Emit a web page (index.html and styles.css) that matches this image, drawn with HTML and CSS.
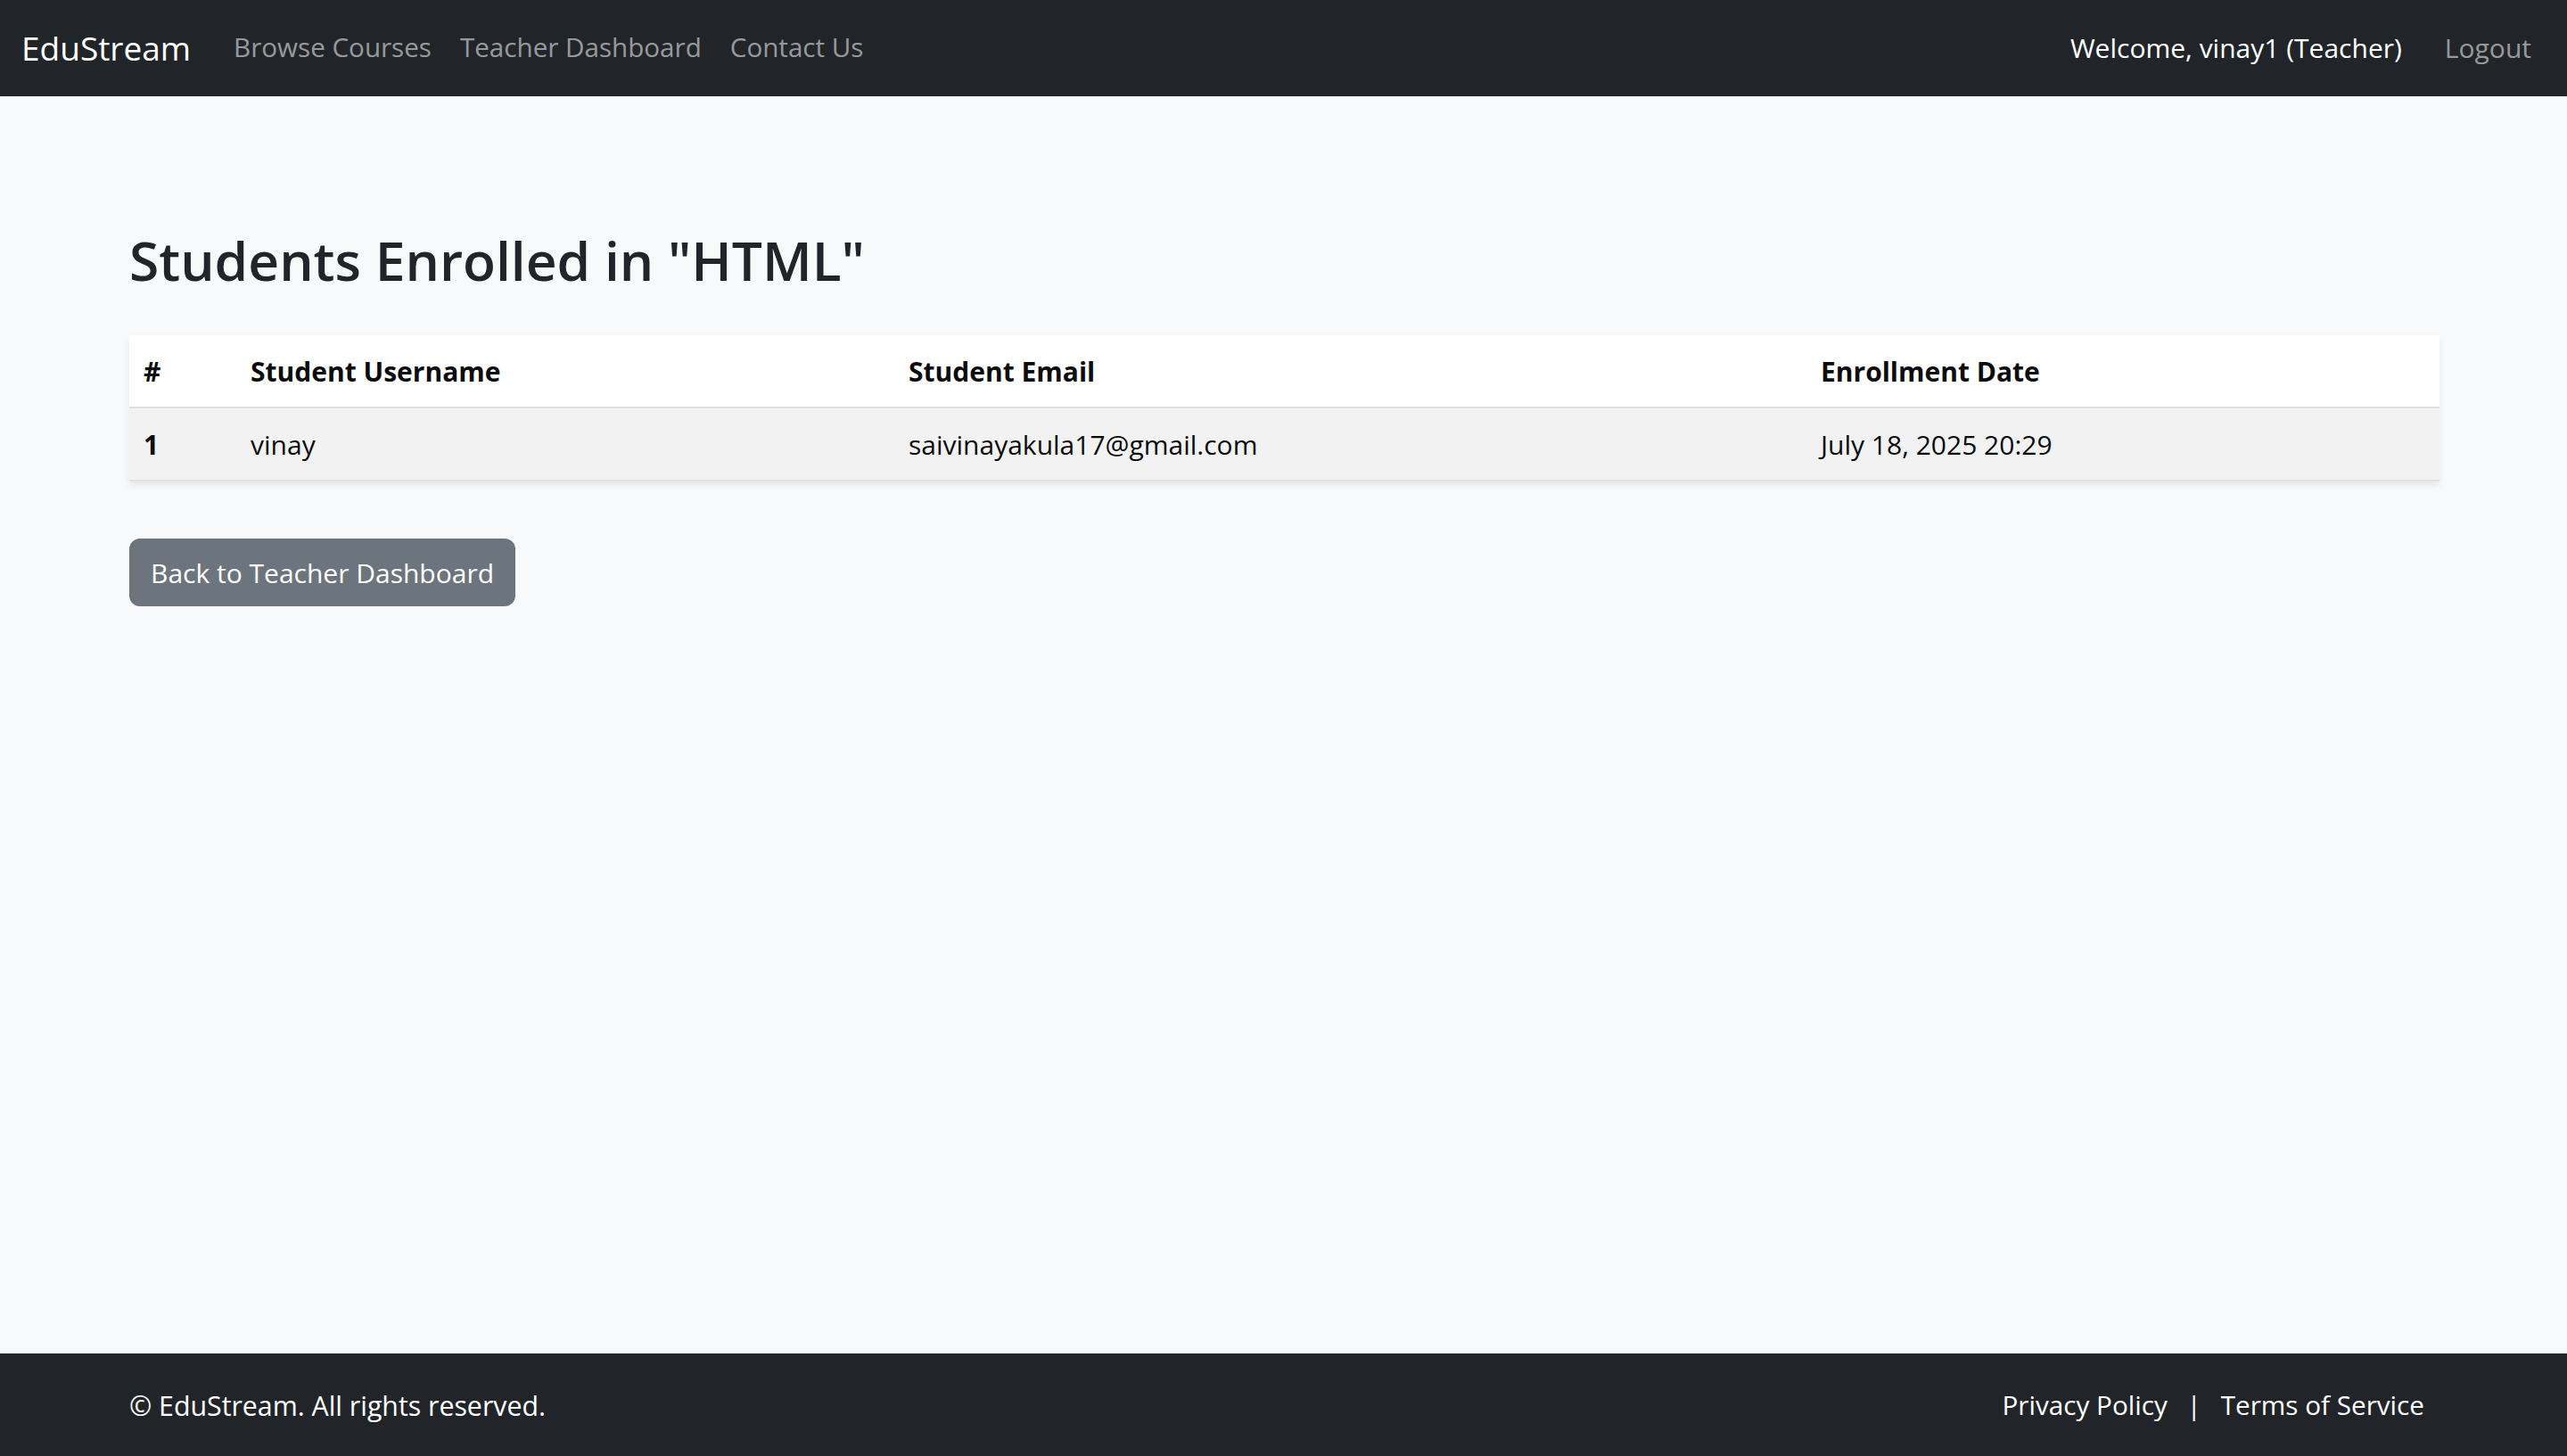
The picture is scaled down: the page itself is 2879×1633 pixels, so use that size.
FILE: index.html
```html
<!DOCTYPE html>
<html lang="en">
<head>
<meta charset="utf-8">
<title>Enrolled Students - EduStream</title>
<link rel="stylesheet" href="styles.css">
</head>
<body>
<nav class="navbar">
  <a class="brand" href="#">EduStream</a>
  <ul class="nav-links">
    <li><a class="nav-link" href="#">Browse Courses</a></li>
    <li><a class="nav-link" href="#">Teacher Dashboard</a></li>
    <li><a class="nav-link" href="#">Contact Us</a></li>
  </ul>
  <div class="nav-right">
    <span class="welcome">Welcome, vinay1 (Teacher)</span>
    <a class="nav-link" href="#">Logout</a>
  </div>
</nav>

<main class="main">
  <div class="container">
    <h1 class="title">Students Enrolled in "HTML"</h1>
    <table class="students">
      <colgroup>
        <col class="c-num">
        <col class="c-user">
        <col class="c-email">
        <col class="c-date">
      </colgroup>
      <thead>
        <tr>
          <th>#</th>
          <th>Student Username</th>
          <th>Student Email</th>
          <th>Enrollment Date</th>
        </tr>
      </thead>
      <tbody>
        <tr>
          <th>1</th>
          <td>vinay</td>
          <td>saivinayakula17@gmail.com</td>
          <td>July 18, 2025 20:29</td>
        </tr>
      </tbody>
    </table>
    <a class="btn" href="#">Back to Teacher Dashboard</a>
  </div>
</main>

<footer class="footer">
  <div class="footer-inner">
    <span class="copy">© EduStream. All rights reserved.</span>
    <div class="footer-links">
      <a href="#">Privacy Policy</a>
      <span class="sep">|</span>
      <a href="#">Terms of Service</a>
    </div>
  </div>
</footer>
</body>
</html>
```

FILE: styles.css
```css
* { box-sizing: border-box; }

html, body {
  margin: 0;
  padding: 0;
}

body {
  font-family: "Open Sans", "Noto Sans", "Liberation Sans", sans-serif;
  font-size: 30px;
  line-height: 1.5;
  color: #212529;
  background: #f8f9fa;
  min-height: 100vh;
  display: flex;
  flex-direction: column;
}

a { text-decoration: none; }

/* Navbar */
.navbar {
  height: 108px;
  background: #212529;
  display: flex;
  align-items: center;
  padding: 0 24px 1px;
}

.brand {
  color: #fff;
  font-size: 37px;
  margin-right: 32px;
  line-height: 1.5;
}

.nav-links {
  list-style: none;
  margin: 0;
  padding: 0;
  display: flex;
  font-size: 29.6px;
}

.nav-link {
  display: block;
  color: rgba(255, 255, 255, 0.55);
  padding: 0 16px;
}

.nav-right {
  margin-left: auto;
  display: flex;
  align-items: center;
}

.welcome {
  color: #fff;
  margin-right: 32px;
}

/* Main */
.main {
  flex: 1;
}

.container {
  margin-left: 145px;
  width: 2591px;
}

.title {
  font-size: 60.5px;
  font-weight: 600;
  line-height: 1.2;
  margin: 148px 0 47px;
}

.students {
  width: 100%;
  border-collapse: collapse;
  table-layout: fixed;
  background: #fff;
  box-shadow: 0 4px 8px rgba(0, 0, 0, 0.075);
  margin-bottom: 64px;
  color: #0b0c0d;
}

.c-num { width: 120px; }
.c-user { width: 738px; }
.c-email { width: 1023px; }
.c-date { width: 710px; }

.students th,
.students td {
  text-align: left;
  padding: 17px 16px 15px;
  line-height: 48px;
  border-bottom: 2px solid #dee2e6;
}

.students thead th {
  font-weight: 700;
  vertical-align: bottom;
}

.students tbody tr {
  background: #f2f2f2;
}

.students tbody th {
  font-weight: 700;
}

.btn {
  display: inline-block;
  background: #6c757d;
  color: #fff;
  border-radius: 12px;
  padding: 13px 24px 11px;
  line-height: 52px;
}

/* Footer */
.footer {
  height: 115px;
  background: #212529;
  color: #fff;
}

.footer-inner {
  margin-left: 145px;
  width: 2574px;
  height: 100%;
  display: flex;
  align-items: center;
  justify-content: space-between;
  padding-top: 2px;
}

.copy {
  font-size: 30.3px;
}

.footer-links {
  font-size: 29.7px;
}

.footer-links a {
  color: #fff;
}

.sep {
  margin: 0 14px;
}
```
